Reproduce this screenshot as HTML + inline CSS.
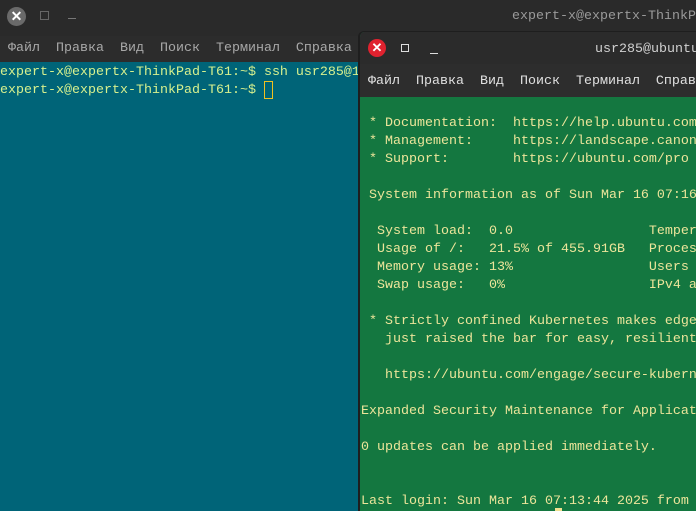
<!DOCTYPE html>
<html><head><meta charset="utf-8"><style>
*{margin:0;padding:0;box-sizing:border-box}
html,body{width:696px;height:511px;overflow:hidden}
body{background:#006478;font-family:"Liberation Mono","DejaVu Sans Mono",monospace;font-size:13.33px;position:relative}
.abs{position:absolute}
pre{font-family:inherit;font-size:inherit;line-height:18px;white-space:pre}
</style></head><body>
<div class="abs" style="left:0;top:0;width:696px;height:36px;background:#2a2a2a"></div>
<div class="abs" style="left:0;top:36px;width:696px;height:26px;background:#2c2c2c"></div>
<div class="abs" style="left:7px;top:7px;width:19px;height:19px;border-radius:50%;background:#6a6a6a;color:#fff;font:bold 14px 'Liberation Sans',sans-serif;text-align:center;line-height:19px">✕</div>
<div class="abs" style="left:40px;top:11px;width:9px;height:9px;border:1px solid #666"></div>
<div class="abs" style="left:68px;top:18px;width:8px;height:1px;background:#777"></div>
<pre class="abs" style="left:512px;top:8px;color:#9a9a9a">expert-x@expertx-ThinkPad-T61</pre>
<pre class="abs" style="left:8px;top:40px;color:#a8a8a8">Файл  Правка  Вид  Поиск  Терминал  Справка</pre>
<pre class="abs" style="left:0;top:64px;color:#d6f08e">expert-x@expertx-ThinkPad-T61:~$ ssh usr285@1
expert-x@expertx-ThinkPad-T61:~$ </pre>
<div class="abs" style="left:264px;top:81px;width:9px;height:18px;border:1px solid #f0c020"></div>

<div class="abs" style="left:358px;top:31px;width:338px;height:480px;background:#147740;border-left:2px solid #1e1e1e;border-top:1px solid #1e1e1e;border-radius:6px 0 0 0;overflow:hidden">
 <div class="abs" style="left:0;top:0;width:340px;height:32px;background:#2b2b2b"></div>
 <div class="abs" style="left:0;top:32px;width:340px;height:33px;background:#2d2d2d"></div>
 <div class="abs" style="left:8px;top:7px;width:18px;height:18px;border-radius:50%;background:#e0222f;color:#fff;font:bold 13px 'Liberation Sans',sans-serif;text-align:center;line-height:18px">✕</div>
 <div class="abs" style="left:41px;top:12px;width:8px;height:8px;border:1px solid #ddd"></div>
 <div class="abs" style="left:70px;top:21px;width:8px;height:1px;background:#ddd"></div>
 <pre class="abs" style="left:235px;top:9px;color:#d0d0d0">usr285@ubuntu</pre>
 <pre class="abs" style="left:8px;top:41px;color:#e0e0e0">Файл  Правка  Вид  Поиск  Терминал  Справка</pre>
 <pre class="abs" style="left:1px;top:83px;color:#ece59a"> * Documentation:  https://help.ubuntu.com
 * Management:     https://landscape.canonical.com
 * Support:        https://ubuntu.com/pro

 System information as of Sun Mar 16 07:16

  System load:  0.0                 Temperature
  Usage of /:   21.5% of 455.91GB   Processes
  Memory usage: 13%                 Users
  Swap usage:   0%                  IPv4 address

 * Strictly confined Kubernetes makes edge
   just raised the bar for easy, resilient

   https://ubuntu.com/engage/secure-kubernetes

Expanded Security Maintenance for Applications

0 updates can be applied immediately.


Last login: Sun Mar 16 07:13:44 2025 from</pre>
 <div class="abs" style="left:195px;top:476px;width:7px;height:4px;background:#f0e090"></div>
</div>
</body></html>
